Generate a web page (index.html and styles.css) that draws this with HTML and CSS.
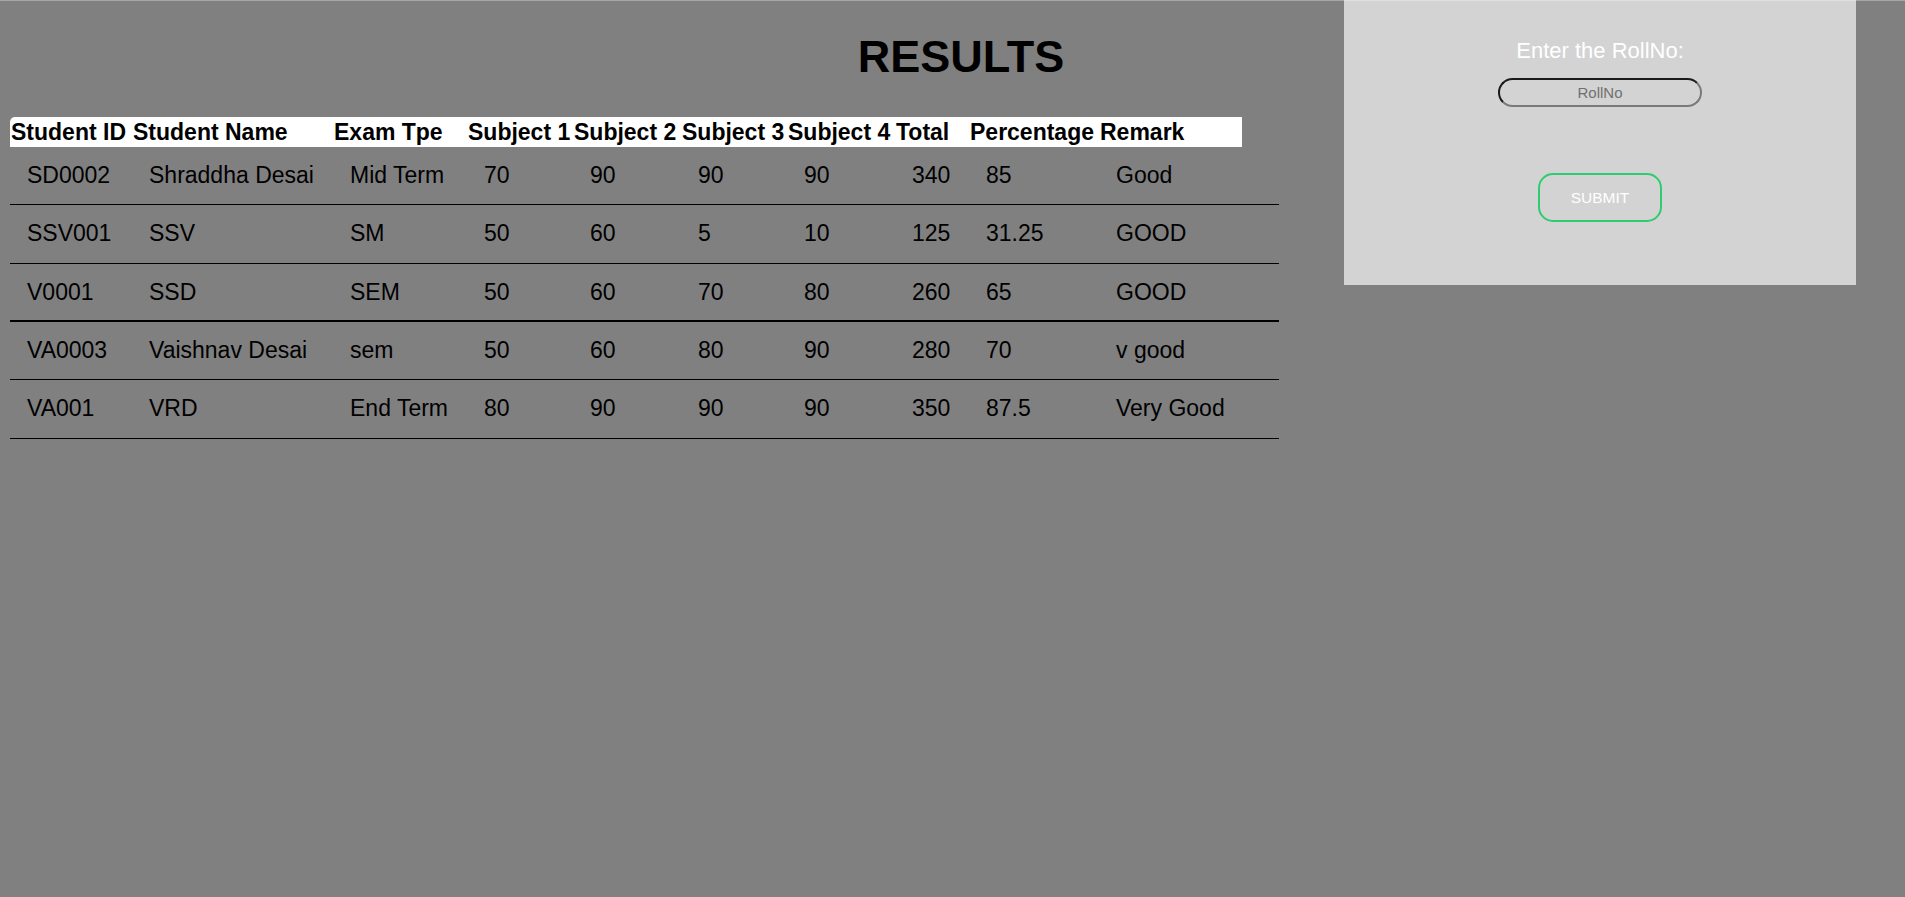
FILE: index.html
```html
<!DOCTYPE html>
<html lang="en">
<head>
<meta charset="utf-8">
<title>Results</title>
<link rel="stylesheet" href="styles.css">
</head>
<body>
<div class="page">
  <h1 class="title">RESULTS</h1>
  <div class="table-wrap">
    <table class="results">
      <colgroup>
        <col class="c-id"><col class="c-name"><col class="c-exam"><col class="c-s1"><col class="c-s2"><col class="c-s3"><col class="c-s4"><col class="c-total"><col class="c-pct"><col class="c-remark"><col class="c-extra">
      </colgroup>
      <thead>
        <tr>
          <th>Student ID</th><th>Student Name</th><th>Exam Tpe</th><th>Subject 1</th><th>Subject 2</th><th>Subject 3</th><th>Subject 4</th><th>Total</th><th>Percentage</th><th>Remark</th>
        </tr>
      </thead>
      <tbody>
        <tr><td>SD0002</td><td>Shraddha Desai</td><td>Mid Term</td><td>70</td><td>90</td><td>90</td><td>90</td><td>340</td><td>85</td><td>Good</td><td></td></tr>
        <tr><td>SSV001</td><td>SSV</td><td>SM</td><td>50</td><td>60</td><td>5</td><td>10</td><td>125</td><td>31.25</td><td>GOOD</td><td></td></tr>
        <tr class="thick"><td>V0001</td><td>SSD</td><td>SEM</td><td>50</td><td>60</td><td>70</td><td>80</td><td>260</td><td>65</td><td>GOOD</td><td></td></tr>
        <tr><td>VA0003</td><td>Vaishnav Desai</td><td>sem</td><td>50</td><td>60</td><td>80</td><td>90</td><td>280</td><td>70</td><td>v good</td><td></td></tr>
        <tr><td>VA001</td><td>VRD</td><td>End Term</td><td>80</td><td>90</td><td>90</td><td>90</td><td>350</td><td>87.5</td><td>Very Good</td><td></td></tr>
      </tbody>
    </table>
  </div>
  <aside class="panel">
    <label class="panel-label" for="rollno">Enter the RollNo:</label>
    <input class="roll-input" id="rollno" type="text" placeholder="RollNo">
    <button class="submit-btn" type="button">SUBMIT</button>
  </aside>
</div>
</body>
</html>
```

FILE: styles.css
```css
html, body {
  margin: 0;
  padding: 0;
}
body {
  background: #808080;
  font-family: "Liberation Sans", Arial, sans-serif;
  color: #000;
}
.page {
  position: relative;
  display: grid;
  grid-template-columns: 1fr 512px 49px;
  grid-template-rows: auto auto;
  min-height: 897px;
  align-content: start;
}
.page::before {
  content: "";
  position: absolute;
  top: 0;
  left: 0;
  right: 0;
  height: 1px;
  background: rgba(255, 255, 255, 0.3);
  z-index: 5;
}
.title {
  grid-column: 1 / -1;
  grid-row: 1;
  margin: 0;
  padding: 31px 0 35px 17px;
  font-size: 45px;
  line-height: 51px;
  font-weight: bold;
  text-align: center;
}
.table-wrap {
  grid-column: 1;
  grid-row: 2;
  padding-left: 10px;
}
.results {
  border-collapse: collapse;
  table-layout: fixed;
  width: 1269px;
  font-size: 23px;
}
.c-id { width: 122px; }
.c-name { width: 201px; }
.c-exam { width: 134px; }
.c-s1 { width: 106px; }
.c-s2 { width: 108px; }
.c-s3 { width: 106px; }
.c-s4 { width: 108px; }
.c-total { width: 74px; }
.c-pct { width: 130px; }
.c-remark { width: 143px; }
.c-extra { width: 37px; }
.results th {
  background: #fff;
  text-align: left;
  font-weight: bold;
  padding: 2px 1px;
  line-height: 26px;
  white-space: nowrap;
}
.results th:first-child {
  border-top-left-radius: 5px;
}
.results td {
  padding: 15px 17px 16.33px 17px;
  line-height: 26px;
  border-bottom: 1px solid #000;
  white-space: nowrap;
}
.results tr.thick td {
  border-bottom-width: 2px;
  padding-bottom: 15.33px;
}
.panel {
  grid-column: 2;
  grid-row: 1 / span 2;
  align-self: start;
  position: relative;
  z-index: 2;
  height: 285px;
  box-sizing: border-box;
  background: #d3d3d3;
  display: flex;
  flex-direction: column;
  align-items: center;
  padding-top: 38px;
}
.panel-label {
  color: #fff;
  font-size: 22px;
  line-height: 25px;
}
.roll-input {
  margin-top: 15px;
  box-sizing: border-box;
  width: 204px;
  height: 29px;
  border-radius: 15px;
  border-width: 2px;
  border-style: solid;
  border-color: #1a1a1a #7a7a7a #7a7a7a #1a1a1a;
  background: transparent;
  font-family: "Liberation Sans", Arial, sans-serif;
  font-size: 15px;
  text-align: center;
  color: #333;
  outline: none;
  padding: 0 10px;
}
.roll-input::placeholder {
  color: #707070;
}
.submit-btn {
  margin-top: 66px;
  box-sizing: border-box;
  width: 124px;
  height: 49px;
  border: 2px solid #2ecc71;
  border-radius: 15px;
  background: transparent;
  color: #fff;
  font-family: "Liberation Sans", Arial, sans-serif;
  font-size: 15.5px;
  cursor: pointer;
  padding: 0;
}
```
